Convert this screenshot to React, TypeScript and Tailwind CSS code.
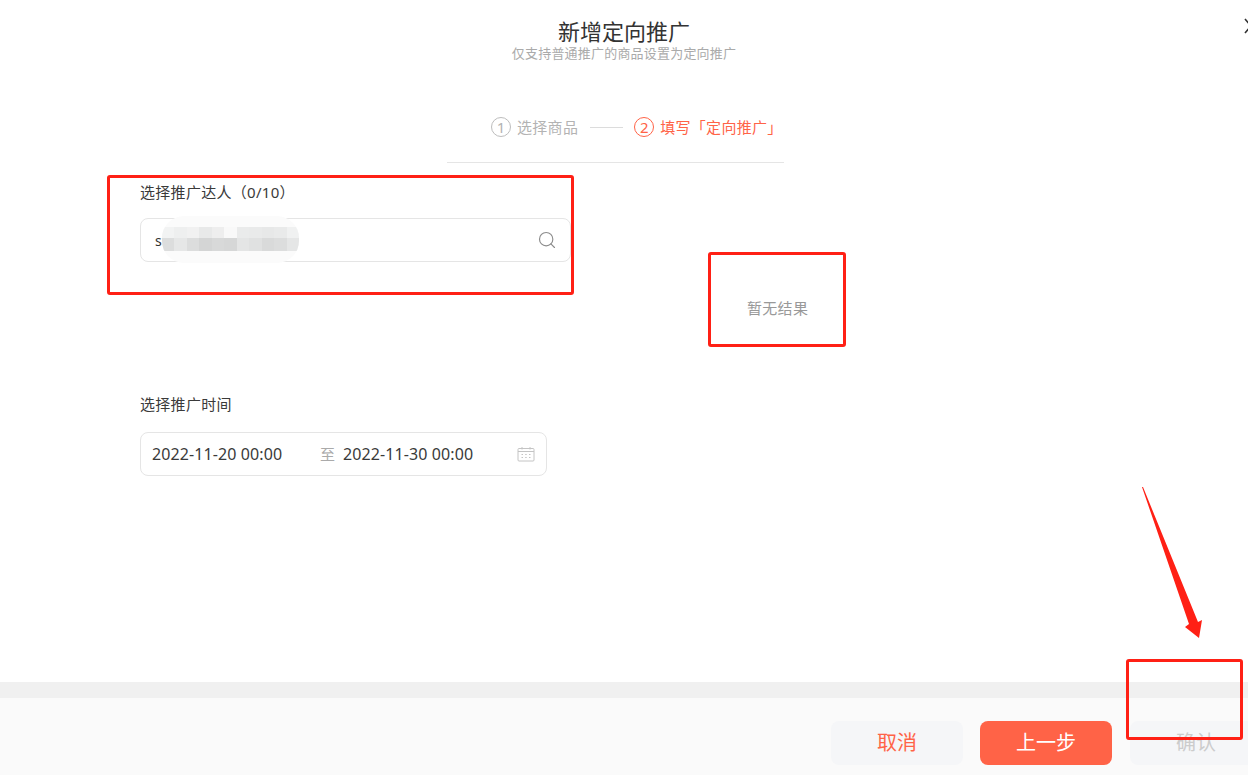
import { Search } from 'lucide-react';

const font = "[font-family:'Noto_Sans','Noto_Sans_CJK_SC',sans-serif]";

// mosaic over the blurred-out account name
const topCells = ['bg-[#f2f3f3]', 'bg-[#eeefef]', 'bg-[#f1f1f1]', 'bg-[#e8e9e9]', 'bg-[#eeeeee]', 'bg-[#f9f9f9]', 'bg-[#eaebeb]', 'bg-[#e9eaea]', 'bg-[#e7e8e8]', 'bg-[#e9eaea]', 'bg-[#f0f1f1]'];
const bottomCells = ['bg-[#dcdddd]', 'bg-[#e6e7e7]', 'bg-[#dcdddd]', 'bg-[#d4d5d5]', 'bg-[#d8d9d9]', 'bg-[#d6d7d7]', 'bg-[#e4e5e5]', 'bg-[#e0e1e1]', 'bg-[#d9dada]', 'bg-[#dcdddd]', 'bg-[#e5e6e6]'];

function Step({ n, label, active }: { n: string; label: string; active?: boolean }) {
  return (
    <div className={active ? 'flex items-center text-[#ff6347]' : 'flex items-center text-[#b3b3b3]'}>
      <div className={active ? 'flex h-5 w-5 items-center justify-center rounded-full border border-[#ff6347] text-[15px] leading-none' : 'flex h-5 w-5 items-center justify-center rounded-full border border-[#bdbdbd] text-[15px] leading-none'}>{n}</div>
      <span className="ml-[6px] text-[15px] leading-5 tracking-[0.3px]">{label}</span>
    </div>
  );
}

function CalendarIcon() {
  return (
    <svg width="18" height="16" viewBox="0 0 18 16" fill="none" stroke="#c4c4c4" strokeWidth="1">
      <rect x="1" y="2.5" width="16" height="12.5" rx="1" />
      <path d="M1 5.5h16M5 1v2.5M13 1v2.5" />
      <path d="M4.5 8.5h1.5M8.2 8.5h1.5M12 8.5h1.5M4.5 11.5h1.5M8.2 11.5h1.5M12 11.5h1.5" />
    </svg>
  );
}

function Arrow() {
  return (
    <svg className="absolute left-[1130px] top-[480px]" width="80" height="165" viewBox="0 0 80 165" fill="#ff2015">
      <polygon points="12,7 13,7 68,142 72,140 69,158 55,147 59,144" />
    </svg>
  );
}

export default function App() {
  return (
    <div className={`relative flex h-[775px] w-[1248px] flex-col overflow-hidden bg-white ${font}`}>
      <svg className="absolute left-[1243px] top-[16px]" width="16" height="20" viewBox="0 0 16 20" fill="none" stroke="#333" strokeWidth="1.6">
        <path d="M2 3l12 14M14 3L2 17" />
      </svg>

      <div className="flex-1">
        <div className="pt-[18px] text-center">
          <div className="text-[22px] leading-[27px] text-[#333]">新增定向推广</div>
          <div className="text-[13px] leading-[16px] tracking-[0.2px] text-[#aaa]">仅支持普通推广的商品设置为定向推广</div>
        </div>

        <div className="ml-[447px] mt-[56px] w-[337px] border-b border-[#e5e5e5] pb-[25px]">
          <div className="ml-[44px] flex items-center">
            <Step n="1" label="选择商品" />
            <div className="ml-[12px] mr-[11px] h-px w-[33px] bg-[#dcdcdc]" />
            <Step n="2" label="填写「定向推广」" active />
          </div>
        </div>

        <div className="flex pl-[140px]">
          <div className="w-[431px] pt-[19px]">
            <div className="text-[15px] leading-5 tracking-[0.3px] text-[#3a3a3a]">选择推广达人（0/10）</div>
            <div className="relative mt-[16px] flex h-[44px] items-center justify-between rounded-lg border border-[#e5e5e5] pl-[14px] pr-[13px]">
              <span className="text-[14px] text-[#333]">s</span>
              <Search size={20} strokeWidth={1.4} className="text-[#8c8c8c]" />
              <div className="absolute left-[21px] top-[-3px] h-[47px] w-[137px] overflow-hidden rounded-[22px] bg-[#fbfbfb] pt-[11px]">
                <div className="flex h-[11px]">
                  {topCells.map((c, i) => (
                    <div key={i} className={`h-full w-[12.5px] ${c}`} />
                  ))}
                </div>
                <div className="flex h-[13px]">
                  {bottomCells.map((c, i) => (
                    <div key={i} className={`h-full w-[12.5px] ${c}`} />
                  ))}
                </div>
              </div>
            </div>
          </div>
          <div className="ml-[176px] pt-[135px] text-[15px] leading-5 tracking-[0.3px] text-[#999]">暂无结果</div>
        </div>

        <div className="pl-[140px] pt-[76px]">
          <div className="text-[15px] leading-5 tracking-[0.3px] text-[#3a3a3a]">选择推广时间</div>
          <div className="mt-[18px] flex h-[44px] w-[407px] items-center rounded-lg border border-[#e5e5e5] pl-[11px] pr-[11px] text-[16px] tracking-[0.1px] text-[#3a3a3a]">
            <span className="w-[168px]">2022-11-20 00:00</span>
            <span className="w-[23px] text-[15px] text-[#aaa]">至</span>
            <span>2022-11-30 00:00</span>
            <span className="ml-auto"><CalendarIcon /></span>
          </div>
        </div>
      </div>

      <div className="h-[16px] shrink-0 bg-[#f0f0f0]" />
      <div className="flex h-[77px] shrink-0 items-start gap-[17px] bg-[#fafafa] pl-[831px] pt-[23px] text-[20px]">
        <button className="h-[44px] w-[132px] shrink-0 rounded-lg bg-[#f5f6f8] text-[#ff6347]">取消</button>
        <button className="h-[44px] w-[132px] shrink-0 rounded-lg bg-[#ff6347] text-white">上一步</button>
        <button className="ml-px h-[44px] w-[132px] shrink-0 rounded-lg bg-[#f5f6f8] text-[#ccc]">确认</button>
      </div>

      <div className="absolute left-[107px] top-[175px] h-[120px] w-[467px] rounded-[3px] border-[3px] border-[#ff2015]" />
      <div className="absolute left-[708px] top-[252px] h-[95px] w-[138px] rounded-[3px] border-[3px] border-[#ff2015]" />
      <div className="absolute left-[1126px] top-[659px] h-[81px] w-[117px] rounded-[3px] border-[3px] border-[#ff2015]" />
      <Arrow />
    </div>
  );
}
